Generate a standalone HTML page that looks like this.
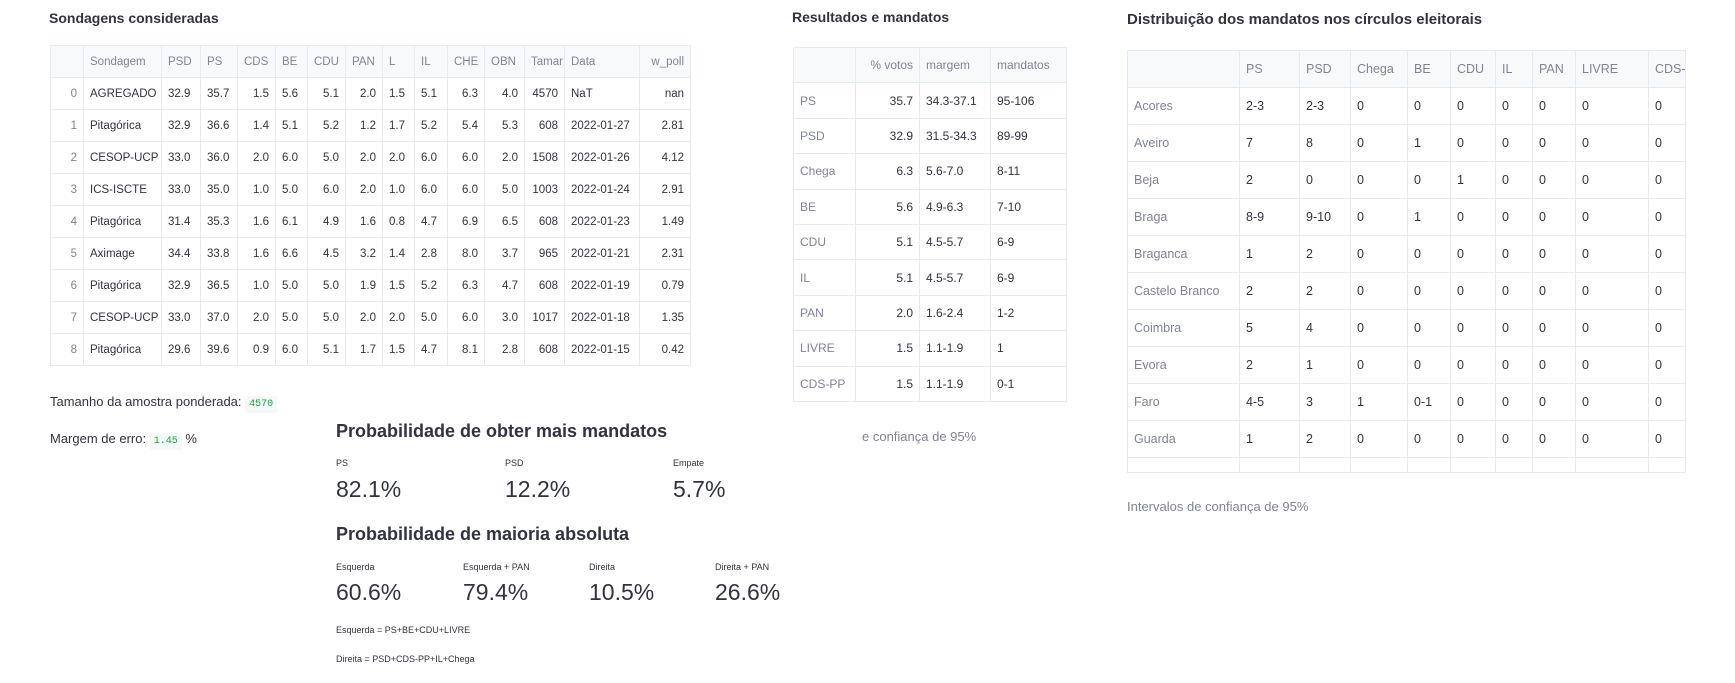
<!DOCTYPE html>
<html><head><meta charset="utf-8"><style>
body{margin:0;width:1735px;height:683px;background:#fff;font-family:"Liberation Sans",sans-serif;color:#31333F;position:relative;overflow:hidden}
.a{position:absolute;white-space:nowrap}
table{border-collapse:collapse;table-layout:fixed;position:absolute;font-size:11.5px}
td,th{border:1px solid #e6eaf1;padding:0 6px;overflow:hidden;white-space:nowrap;font-weight:normal}
th{background:#f8f9fb;color:#808495;text-align:left}
.t1 td,.t1 th{height:31px}
.r{text-align:right}
.ix{color:#808495;text-align:right;background:#fff}
.t2 td,.t2 th{height:34.4px}
.t2 td:first-child{color:#808495}
.t3 td,.t3 th{height:36px}
.t3 td:first-child{color:#808495}
h3{margin:0;font-size:14px;font-weight:bold}
code{font-family:"Liberation Mono",monospace;color:#09ab3b;background:#f6f7f9;font-size:10px;padding:3px 4px;border-radius:3px}
.big{font-size:23px}
.sm{font-size:9px}
.hh{font-size:18px;font-weight:bold}
</style></head><body>
<div class="a" style="left:49px;top:10px"><h3>Sondagens consideradas</h3></div>
<table class="t1" style="left:50px;top:45px;width:640px">
<colgroup><col style="width:33px"><col style="width:78px"><col style="width:39px"><col style="width:37px"><col style="width:38px"><col style="width:32px"><col style="width:38px"><col style="width:37px"><col style="width:32px"><col style="width:33px"><col style="width:37px"><col style="width:40px"><col style="width:40px"><col style="width:75px"><col style="width:51px"></colgroup>
<tr><th></th><th>Sondagem</th><th>PSD</th><th>PS</th><th>CDS</th><th>BE</th><th>CDU</th><th>PAN</th><th>L</th><th>IL</th><th>CHE</th><th>OBN</th><th>Tamar</th><th>Data</th><th class="r">w_poll</th></tr>
<tr><td class="ix">0</td><td>AGREGADO</td><td>32.9</td><td>35.7</td><td class="r">1.5</td><td>5.6</td><td class="r">5.1</td><td class="r">2.0</td><td>1.5</td><td>5.1</td><td class="r">6.3</td><td class="r">4.0</td><td class="r">4570</td><td>NaT</td><td class="r">nan</td></tr>
<tr><td class="ix">1</td><td>Pitagórica</td><td>32.9</td><td>36.6</td><td class="r">1.4</td><td>5.1</td><td class="r">5.2</td><td class="r">1.2</td><td>1.7</td><td>5.2</td><td class="r">5.4</td><td class="r">5.3</td><td class="r">608</td><td>2022-01-27</td><td class="r">2.81</td></tr>
<tr><td class="ix">2</td><td>CESOP-UCP</td><td>33.0</td><td>36.0</td><td class="r">2.0</td><td>6.0</td><td class="r">5.0</td><td class="r">2.0</td><td>2.0</td><td>6.0</td><td class="r">6.0</td><td class="r">2.0</td><td class="r">1508</td><td>2022-01-26</td><td class="r">4.12</td></tr>
<tr><td class="ix">3</td><td>ICS-ISCTE</td><td>33.0</td><td>35.0</td><td class="r">1.0</td><td>5.0</td><td class="r">6.0</td><td class="r">2.0</td><td>1.0</td><td>6.0</td><td class="r">6.0</td><td class="r">5.0</td><td class="r">1003</td><td>2022-01-24</td><td class="r">2.91</td></tr>
<tr><td class="ix">4</td><td>Pitagórica</td><td>31.4</td><td>35.3</td><td class="r">1.6</td><td>6.1</td><td class="r">4.9</td><td class="r">1.6</td><td>0.8</td><td>4.7</td><td class="r">6.9</td><td class="r">6.5</td><td class="r">608</td><td>2022-01-23</td><td class="r">1.49</td></tr>
<tr><td class="ix">5</td><td>Aximage</td><td>34.4</td><td>33.8</td><td class="r">1.6</td><td>6.6</td><td class="r">4.5</td><td class="r">3.2</td><td>1.4</td><td>2.8</td><td class="r">8.0</td><td class="r">3.7</td><td class="r">965</td><td>2022-01-21</td><td class="r">2.31</td></tr>
<tr><td class="ix">6</td><td>Pitagórica</td><td>32.9</td><td>36.5</td><td class="r">1.0</td><td>5.0</td><td class="r">5.0</td><td class="r">1.9</td><td>1.5</td><td>5.2</td><td class="r">6.3</td><td class="r">4.7</td><td class="r">608</td><td>2022-01-19</td><td class="r">0.79</td></tr>
<tr><td class="ix">7</td><td>CESOP-UCP</td><td>33.0</td><td>37.0</td><td class="r">2.0</td><td>5.0</td><td class="r">5.0</td><td class="r">2.0</td><td>2.0</td><td>5.0</td><td class="r">6.0</td><td class="r">3.0</td><td class="r">1017</td><td>2022-01-18</td><td class="r">1.35</td></tr>
<tr><td class="ix">8</td><td>Pitagórica</td><td>29.6</td><td>39.6</td><td class="r">0.9</td><td>6.0</td><td class="r">5.1</td><td class="r">1.7</td><td>1.5</td><td>4.7</td><td class="r">8.1</td><td class="r">2.8</td><td class="r">608</td><td>2022-01-15</td><td class="r">0.42</td></tr>
</table>

<div class="a" style="left:50px;top:394px;font-size:13px">Tamanho da amostra ponderada: <code>4570</code></div>
<div class="a" style="left:50px;top:431px;font-size:13px">Margem de erro: <code>1.45</code> %</div>

<div class="a hh" style="left:336px;top:421px">Probabilidade de obter mais mandatos</div>
<div class="a sm" style="left:336px;top:458px">PS</div>
<div class="a sm" style="left:505px;top:458px">PSD</div>
<div class="a sm" style="left:673px;top:458px">Empate</div>
<div class="a big" style="left:336px;top:476px">82.1%</div>
<div class="a big" style="left:505px;top:476px">12.2%</div>
<div class="a big" style="left:673px;top:476px">5.7%</div>
<div class="a hh" style="left:336px;top:524px">Probabilidade de maioria absoluta</div>
<div class="a sm" style="left:336px;top:562px">Esquerda</div>
<div class="a sm" style="left:463px;top:562px">Esquerda + PAN</div>
<div class="a sm" style="left:589px;top:562px">Direita</div>
<div class="a sm" style="left:715px;top:562px">Direita + PAN</div>
<div class="a big" style="left:336px;top:579px">60.6%</div>
<div class="a big" style="left:463px;top:579px">79.4%</div>
<div class="a big" style="left:589px;top:579px">10.5%</div>
<div class="a big" style="left:715px;top:579px">26.6%</div>
<div class="a sm" style="left:336px;top:625px">Esquerda = PS+BE+CDU+LIVRE</div>
<div class="a sm" style="left:336px;top:654px">Direita = PSD+CDS-PP+IL+Chega</div>

<div class="a" style="left:792px;top:9px"><h3>Resultados e mandatos</h3></div>
<table class="t2" style="left:793px;top:47px;width:273px;font-size:12px">
<colgroup><col style="width:62px"><col style="width:64px"><col style="width:71px"><col style="width:76px"></colgroup>
<tr><th></th><th class="r">% votos</th><th>margem</th><th>mandatos</th></tr>
<tr><td>PS</td><td class="r">35.7</td><td>34.3-37.1</td><td>95-106</td></tr>
<tr><td>PSD</td><td class="r">32.9</td><td>31.5-34.3</td><td>89-99</td></tr>
<tr><td>Chega</td><td class="r">6.3</td><td>5.6-7.0</td><td>8-11</td></tr>
<tr><td>BE</td><td class="r">5.6</td><td>4.9-6.3</td><td>7-10</td></tr>
<tr><td>CDU</td><td class="r">5.1</td><td>4.5-5.7</td><td>6-9</td></tr>
<tr><td>IL</td><td class="r">5.1</td><td>4.5-5.7</td><td>6-9</td></tr>
<tr><td>PAN</td><td class="r">2.0</td><td>1.6-2.4</td><td>1-2</td></tr>
<tr><td>LIVRE</td><td class="r">1.5</td><td>1.1-1.9</td><td>1</td></tr>
<tr><td>CDS-PP</td><td class="r">1.5</td><td>1.1-1.9</td><td>0-1</td></tr>
</table>
<div class="a" style="left:862px;top:429px;font-size:13px;color:#808495">e confiança de 95%</div>

<div class="a" style="left:1127px;top:11px;font-size:15px;font-weight:bold">Distribuição dos mandatos nos círculos eleitorais</div>
<div style="position:absolute;left:1127px;top:50px;width:558px;height:422px;overflow:hidden;border-right:1px solid #e6eaf1;border-bottom:1px solid #e6eaf1">
<table class="t3" style="left:0;top:0;width:600px;font-size:12.5px">
<colgroup><col style="width:112px"><col style="width:60px"><col style="width:51px"><col style="width:57px"><col style="width:43px"><col style="width:45px"><col style="width:37px"><col style="width:43px"><col style="width:73px"><col style="width:79px"></colgroup>
<tr><th></th><th>PS</th><th>PSD</th><th>Chega</th><th>BE</th><th>CDU</th><th>IL</th><th>PAN</th><th>LIVRE</th><th>CDS-PP</th></tr>
<tr><td>Acores</td><td>2-3</td><td>2-3</td><td>0</td><td>0</td><td>0</td><td>0</td><td>0</td><td>0</td><td>0</td></tr>
<tr><td>Aveiro</td><td>7</td><td>8</td><td>0</td><td>1</td><td>0</td><td>0</td><td>0</td><td>0</td><td>0</td></tr>
<tr><td>Beja</td><td>2</td><td>0</td><td>0</td><td>0</td><td>1</td><td>0</td><td>0</td><td>0</td><td>0</td></tr>
<tr><td>Braga</td><td>8-9</td><td>9-10</td><td>0</td><td>1</td><td>0</td><td>0</td><td>0</td><td>0</td><td>0</td></tr>
<tr><td>Braganca</td><td>1</td><td>2</td><td>0</td><td>0</td><td>0</td><td>0</td><td>0</td><td>0</td><td>0</td></tr>
<tr><td>Castelo Branco</td><td>2</td><td>2</td><td>0</td><td>0</td><td>0</td><td>0</td><td>0</td><td>0</td><td>0</td></tr>
<tr><td>Coimbra</td><td>5</td><td>4</td><td>0</td><td>0</td><td>0</td><td>0</td><td>0</td><td>0</td><td>0</td></tr>
<tr><td>Evora</td><td>2</td><td>1</td><td>0</td><td>0</td><td>0</td><td>0</td><td>0</td><td>0</td><td>0</td></tr>
<tr><td>Faro</td><td>4-5</td><td>3</td><td>1</td><td>0-1</td><td>0</td><td>0</td><td>0</td><td>0</td><td>0</td></tr>
<tr><td>Guarda</td><td>1</td><td>2</td><td>0</td><td>0</td><td>0</td><td>0</td><td>0</td><td>0</td><td>0</td></tr>
<tr><td></td><td></td><td></td><td></td><td></td><td></td><td></td><td></td><td></td><td></td></tr>
</table></div>
<div class="a" style="left:1127px;top:499px;font-size:13px;color:#808495">Intervalos de confiança de 95%</div>
</body></html>
